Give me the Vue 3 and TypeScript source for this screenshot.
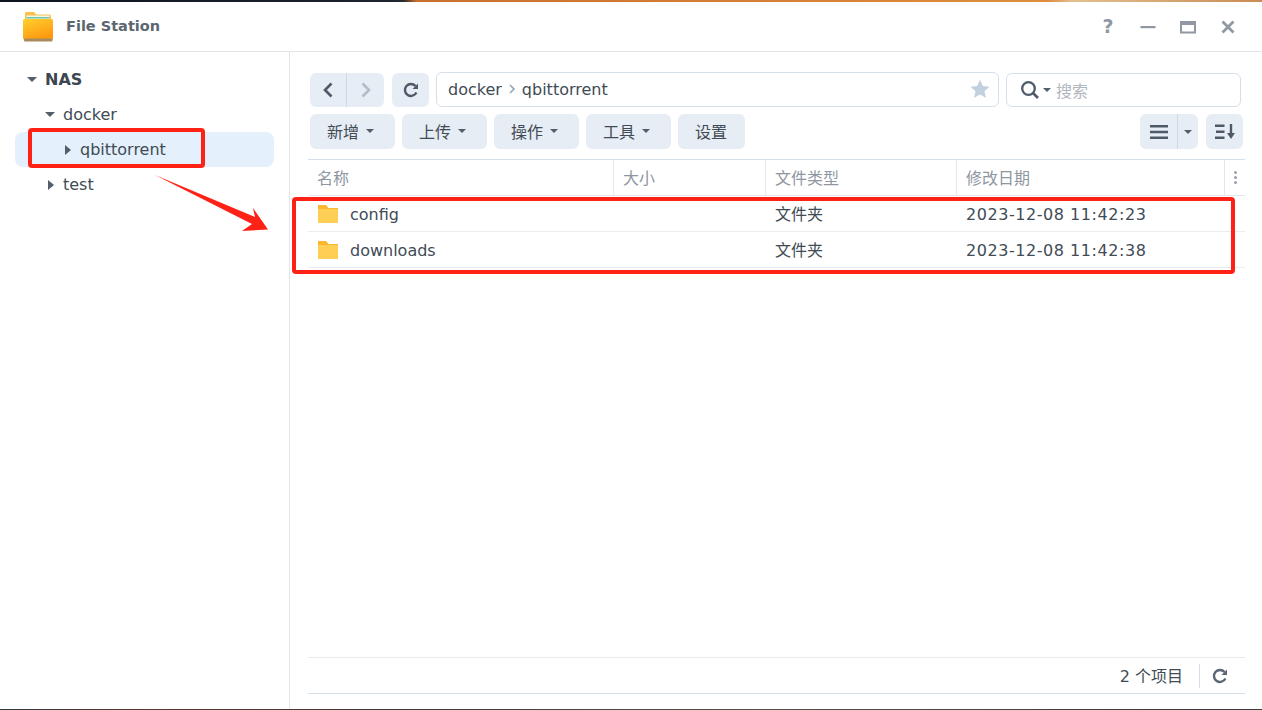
<script setup lang="ts">
const toolbar: { label: string; caret: boolean }[] = [
  { label: '新增', caret: true },
  { label: '上传', caret: true },
  { label: '操作', caret: true },
  { label: '工具', caret: true },
  { label: '设置', caret: false },
]
const files = [
  { name: 'config', type: '文件夹', date: '2023-12-08 11:42:23' },
  { name: 'downloads', type: '文件夹', date: '2023-12-08 11:42:38' },
]
</script>

<template>
  <div class="screen">
    <div class="wallpaper"></div>
    <div class="window">
      <header class="titlebar">
        <svg class="app-icon" width="32" height="32" viewBox="0 0 32 32">
          <defs>
            <linearGradient id="fg" x1="0" y1="0" x2="0.5" y2="1">
              <stop offset="0" stop-color="#ffd02f" />
              <stop offset="1" stop-color="#ff9a10" />
            </linearGradient>
          </defs>
          <path d="M3 2.500a1.500 1.500 0 0 1 1.500-1.500h7.500l2 2.500h13.500a1.500 1.500 0 0 1 1.500 1.500v4H3z" fill="#fbc04a" />
          <rect x="4.500" y="4.500" width="23" height="6" fill="#f2f5ea" />
          <rect x="4.500" y="6" width="23" height="1.500" fill="#6fc7a0" />
          <path d="M1 9.500A1.500 1.500 0 0 1 2.500 8h27A1.500 1.500 0 0 1 31 9.500V27a1.500 1.500 0 0 1-1.500 1.500h-27A1.500 1.500 0 0 1 1 27z" fill="url(#fg)" />
          <rect x="2" y="27.500" width="28.500" height="3" rx="1" fill="#a98a5c" />
        </svg>
        <span class="app-title">File Station</span>
        <div class="win-controls">
          <span class="help">?</span>
          <svg width="16" height="16" viewBox="0 0 16 16"><rect x="0.500" y="7" width="15" height="2.200" fill="#8f98a3" /></svg>
          <svg width="16" height="16" viewBox="0 0 16 16"><path d="M1 3h14v10.500H1z" fill="none" stroke="#8f98a3" stroke-width="2" /><rect x="1" y="2" width="14" height="4" fill="#8f98a3" /></svg>
          <svg width="16" height="16" viewBox="0 0 16 16"><path d="M2.500 2.500l11 11M13.500 2.500l-11 11" stroke="#8f98a3" stroke-width="2.800" /></svg>
        </div>
      </header>

      <div class="body">
        <aside class="tree">
          <div class="node root"><i class="tri down"></i><b>NAS</b></div>
          <div class="node lv1"><i class="tri down"></i>docker</div>
          <div class="node lv2 selected"><i class="tri right"></i>qbittorrent</div>
          <div class="node lv1"><i class="tri right"></i>test</div>
        </aside>

        <main class="content">
          <div class="row nav-row">
            <div class="btn-group">
              <button class="seg">
                <svg width="12" height="18" viewBox="0 0 12 18"><path d="M9.500 2.500L3 9l6.500 6.500" fill="none" stroke="#4e5a68" stroke-width="2.600" /></svg>
              </button>
              <button class="seg">
                <svg width="12" height="18" viewBox="0 0 12 18"><path d="M2.500 2.500L9 9l-6.500 6.500" fill="none" stroke="#b3bcc7" stroke-width="2.600" /></svg>
              </button>
            </div>
            <button class="square">
              <svg width="16" height="16" viewBox="0 0 16 16"><path d="M13.400 10.500A6 6 0 1 1 12.500 4" fill="none" stroke="#4e5a68" stroke-width="2.400" /><path d="M15 1.500v5.500H9.500z" fill="#4e5a68" /></svg>
            </button>
            <div class="path">
              <span>docker</span>
              <svg class="sep" width="8" height="10" viewBox="0 0 8 10"><path d="M2 1l4 4-4 4" fill="none" stroke="#9aa4b0" stroke-width="1.600" /></svg>
              <span>qbittorrent</span>
              <svg class="star" width="20" height="20" viewBox="0 0 20 20"><path d="M10 .8l2.800 6.200 6.700.7-5 4.500 1.400 6.600L10 15.400l-5.900 3.400 1.400-6.600-5-4.500 6.700-.7z" fill="#c3d0df" /></svg>
            </div>
            <div class="search">
              <svg width="20" height="20" viewBox="0 0 20 20"><circle cx="8.500" cy="8.500" r="6.300" fill="none" stroke="#4e5a68" stroke-width="2.300" /><path d="M13 13l5 5" stroke="#4e5a68" stroke-width="2.600" /></svg>
              <i class="tri down small"></i>
              <span class="placeholder">搜索</span>
            </div>
          </div>

          <div class="row tool-row">
            <button v-for="t in toolbar" :key="t.label" class="tool" :class="{ plain: !t.caret }">
              {{ t.label }}<i v-if="t.caret" class="tri down small"></i>
            </button>
            <div class="spacer"></div>
            <div class="view-group">
              <button class="view-main">
                <svg width="18" height="14" viewBox="0 0 18 14"><path d="M0 0h18v2.500H0zM0 5.700h18v2.500H0zM0 11.400h18v2.500H0z" fill="#4e5a68" /></svg>
              </button>
              <button class="view-caret"><i class="tri down small"></i></button>
            </div>
            <button class="square sort">
              <svg width="20" height="16" viewBox="0 0 20 16"><path d="M0 .5h9.500v2.500H0zM1 6.500h8.500V9H1zM0 12.500h9.500V15H0z" fill="#4e5a68" /><path d="M14.800 0h2.400v9H20l-4 6-4-6h2.800z" fill="#4e5a68" /></svg>
            </button>
          </div>

          <div class="grid-head">
            <div class="cell name">名称</div>
            <div class="cell size">大小</div>
            <div class="cell type">文件类型</div>
            <div class="cell date">修改日期</div>
            <div class="cell more"><span></span><span></span><span></span></div>
          </div>

          <div class="grid-body">
            <div v-for="f in files" :key="f.name" class="file-row">
              <div class="cell name latin">
                <svg class="folder" width="22" height="18" viewBox="0 0 22 18">
                  <path d="M1 0h8l2.500 3H21v3H1z" fill="#fbb72f" />
                  <rect x="1" y="4" width="20" height="14" fill="#ffcf55" />
                </svg>
                {{ f.name }}
              </div>
              <div class="cell size"></div>
              <div class="cell type cjk">{{ f.type }}</div>
              <div class="cell date stamp latin">{{ f.date }}</div>
            </div>
          </div>

          <footer class="status">
            <span class="count">2 个项目</span>
            <span class="divider"></span>
            <svg width="16" height="16" viewBox="0 0 16 16"><path d="M13.400 10.500A6 6 0 1 1 12.500 4" fill="none" stroke="#5a6673" stroke-width="2.400" /><path d="M15 1.500v5.500H9.500z" fill="#5a6673" /></svg>
          </footer>
        </main>
      </div>
    </div>
    <div class="wallpaper-bottom"></div>

    <div class="mark mark-tree"></div>
    <div class="mark mark-rows"></div>
    <svg class="arrow" width="120" height="60" viewBox="0 0 120 60">
      <path d="M0 0L100 42 98 33 113 54.500 87 56 97 49z" fill="#fe2116" />
    </svg>
  </div>
</template>

<style>
html, body { margin: 0; padding: 0; background: #fff; }
</style>

<style scoped>
.screen {
  position: relative;
  width: 1262px;
  height: 710px;
  overflow: hidden;
  font-family: "DejaVu Sans", "Noto Sans CJK SC", sans-serif;
  color: #414b55;
  display: flex;
  flex-direction: column;
}
.wallpaper {
  height: 2px;
  flex: none;
  background: linear-gradient(90deg, #0b1420 0, #1b2430 31%, #2a2b2e 32%, #c9702f 33%, #de8d3f 83%, #e3c08f 85%, #c98b52 100%);
}
.wallpaper-bottom {
  height: 1px;
  flex: none;
  background: linear-gradient(90deg, #2f3a3c 0, #5e3a35 12%, #403a38 30%, #55504a 60%, #3a3a3a 100%);
}
.window { flex: 1; display: flex; flex-direction: column; min-height: 0; background: #fff; }
.titlebar {
  height: 50px;
  flex: none;
  box-sizing: border-box;
  display: flex;
  align-items: center;
  border-bottom: 1px solid #e3e5e8;
  padding: 0 26px 0 22px;
}
.app-icon { margin-right: 12px; }
.app-title { font-size: 14.500px; font-weight: 700; color: #5c6670; margin-bottom: 1px; }
.win-controls { margin-left: auto; display: flex; align-items: center; gap: 24px; }
.help { font-size: 19px; font-weight: 700; color: #8f98a3; width: 16px; text-align: center; line-height: 1; }
.body { flex: 1; display: flex; min-height: 0; }
.tree {
  width: 290px;
  flex: none;
  border-right: 1px solid #e3e5e8;
  padding: 10px 15px 0;
  box-sizing: border-box;
}
.node { height: 35px; box-sizing: border-box; display: flex; align-items: center; font-size: 16px; border-radius: 8px; width: 259px; }
.node.root { padding-left: 12px; }
.node.root b { font-weight: 700; color: #3c4650; margin-left: 8px; }
.node.lv1 { padding-left: 30px; }
.node.lv2 { padding-left: 47px; }
.node .tri.down { margin-right: 8px; }
.node.root .tri.down { margin-right: 0; }
.node .tri.right { margin-right: 9px; }
.node.selected { background: #e4f0fb; }
.tri { display: inline-block; width: 0; height: 0; flex: none; }
.tri.down { border-left: 5px solid transparent; border-right: 5px solid transparent; border-top: 5px solid #535e6a; }
.tri.right { border-top: 5px solid transparent; border-bottom: 5px solid transparent; border-left: 6px solid #535e6a; margin-left: 3px; }
.tri.small { border-left-width: 4px; border-right-width: 4px; border-top-width: 4px; }
.content { flex: 1; min-width: 0; display: flex; flex-direction: column; padding: 20px 17px 15px 18px; }
.row { display: flex; align-items: center; }
.nav-row { margin-left: 2px; margin-right: 4px; gap: 7px; height: 35px; }
button { font: inherit; color: inherit; border: 0; padding: 0; cursor: pointer; }
.btn-group { display: flex; height: 34px; border-radius: 6px; overflow: hidden; margin-right: 1px; }
.seg { width: 36px; background: #e7edf4; display: flex; align-items: center; justify-content: center; }
.seg + .seg { width: 38px; border-left: 1px solid #cfd9e4; }
.square { width: 37px; height: 34px; border-radius: 6px; background: #e7edf4; display: flex; align-items: center; justify-content: center; }
.path {
  flex: 1;
  height: 35px;
  box-sizing: border-box;
  border: 1px solid #d6e0eb;
  border-radius: 6px;
  display: flex;
  align-items: center;
  padding: 0 8px 1px 11px;
  font-size: 16px;
}
.sep { margin: 0 6px; }
.star { margin-left: auto; }
.search {
  width: 235px;
  height: 34px;
  box-sizing: border-box;
  border: 1px solid #d6e0eb;
  border-radius: 6px;
  display: flex;
  align-items: center;
  padding-left: 13px;
}
.search .tri { margin: 0 5px 0 3px; }
.placeholder { color: #b0b6bd; font-size: 16px; }
.tool-row { margin: 7px 2px 0 2px; gap: 7px; height: 35px; }
.tool {
  height: 35px;
  width: 85px;
  padding: 0 0 2px 17px;
  box-sizing: border-box;
  background: #e7edf4;
  border-radius: 6px;
  font-size: 16px;
  display: flex;
  align-items: center;
  gap: 7px;
}
.tool.plain { width: 67px; }
.spacer { flex: 1; }
.view-group { display: flex; height: 35px; border-radius: 6px; overflow: hidden; }
.view-main { width: 38px; background: #e7edf4; display: flex; align-items: center; justify-content: center; border-right: 1px solid #cfd9e4; }
.view-caret { width: 20px; background: #e7edf4; display: flex; align-items: center; justify-content: center; }
.sort { margin-left: 1px; height: 35px; }
.grid-head {
  margin-top: 10px;
  height: 37px;
  box-sizing: border-box;
  border-top: 1px solid #d6e0eb;
  border-bottom: 1px solid #e3e8ee;
  display: flex;
  align-items: center;
  font-size: 16px;
  color: #8e969f;
}
.cell { box-sizing: border-box; padding-left: 9px; flex: none; }
.cell.name { width: 306px; display: flex; align-items: center; }
.cell.size { width: 152px; }
.cell.type { width: 191px; }
.cell.date { width: 268px; }
.stamp { letter-spacing: 0.550px; }
.latin { padding-top: 2px; }
.cjk { padding-bottom: 2px; }
.grid-head .cell { height: 100%; display: flex; align-items: center; border-right: 1px solid #e3e8ee; padding-bottom: 2px; }
.grid-head .cell.more { border: 0; width: 18px; padding-left: 9px; padding-bottom: 0; flex-direction: column; justify-content: center; gap: 2px; align-items: flex-start; }
.more span { width: 3px; height: 3px; background: #9aa2ab; border-radius: 50%; }
.grid-body { flex: 1; }
.file-row {
  height: 36px;
  box-sizing: border-box;
  border-bottom: 1px solid #e9edf1;
  display: flex;
  align-items: center;
  font-size: 16px;
}
.folder { margin: -2px 11px 0 0; }
.status {
  height: 37px;
  box-sizing: border-box;
  border-top: 1px solid #e7ebef;
  border-bottom: 1px solid #d6e0eb;
  display: flex;
  align-items: center;
  justify-content: flex-end;
  padding-right: 17px;
  font-size: 16px;
}
.count { margin-bottom: 2px; }
.divider { width: 1px; height: 24px; background: #d6e0eb; margin: 0 12px 0 16px; }
.mark { position: absolute; border: 4px solid #fe2116; border-radius: 4px; box-sizing: border-box; }
.mark-tree { left: 28px; top: 128px; width: 177px; height: 40px; }
.mark-rows { left: 292px; top: 197px; width: 943px; height: 77px; }
.arrow { position: absolute; left: 155px; top: 175px; }
</style>
